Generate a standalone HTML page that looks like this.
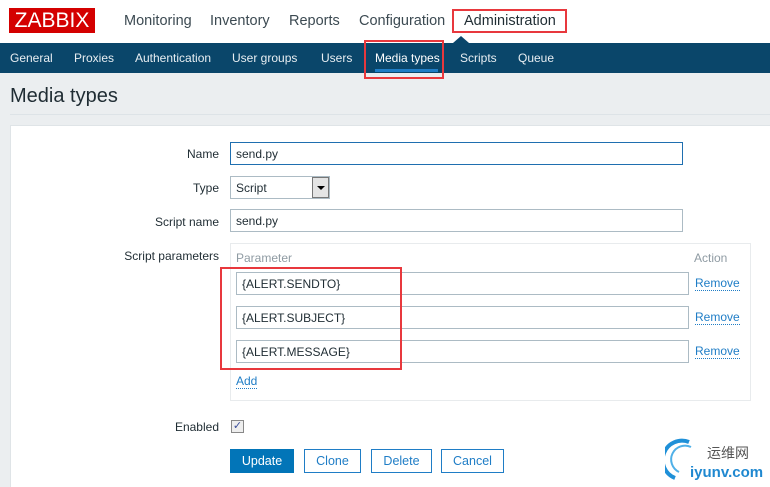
<!DOCTYPE html>
<html style="width:770px;height:487px;overflow:hidden"><head><meta charset="utf-8"><style>
*{box-sizing:border-box;margin:0;padding:0}
body{width:770px;height:487px;overflow:hidden;background:#ebeef0;font-family:"Liberation Sans",Arial,sans-serif;font-size:12px;color:#1f2c33;position:relative}
.a{position:absolute;white-space:nowrap}
.hdr{position:absolute;left:0;top:0;width:770px;height:43px;background:#fff}
.nav{position:absolute;left:0;top:43px;width:770px;height:30px;background:#0a466a}
.nav span{position:absolute;top:8px;color:#e8eef2;font-size:12px}
.top{font-size:14.5px;color:#3c4a52;top:13px}
.red{position:absolute;border:2px solid #e8383d}
.panel{position:absolute;left:10px;top:125px;width:770px;height:362px;background:#fff;border:1px solid #dfe4e7;border-bottom:none}
.lbl{position:absolute;text-align:right;width:200px;left:19px}
.in{position:absolute;background:#fff;border:1px solid #acbbc4;height:23px;padding:4px 5px;font-size:12px}
.rm{position:absolute;left:695px;color:#1f7dc6;border-bottom:1px dotted #1f7dc6;line-height:13px}
.btn{position:absolute;top:449px;height:24px;border:1px solid #1f7dc6;color:#1f7dc6;background:#fff;text-align:center;line-height:22px;font-size:12.5px}
</style></head><body>
<div class="hdr"></div>
<div class="a" style="left:9px;top:8px;width:86px;height:25px;background:#d40000;color:#fff;font-size:21px;line-height:25px;text-align:center">ZABBIX</div>
<span class="a top" style="left:124px">Monitoring</span>
<span class="a top" style="left:210px">Inventory</span>
<span class="a top" style="left:289px">Reports</span>
<span class="a top" style="left:359px">Configuration</span>
<span class="a top" style="left:464px;color:#1f2c33">Administration</span>
<div class="red" style="left:452px;top:9px;width:115px;height:24px"></div>
<div class="a" style="left:453px;top:36px;width:0;height:0;border-left:8px solid transparent;border-right:8px solid transparent;border-bottom:7px solid #0a466a"></div>
<div class="nav">
<span style="left:10px">General</span><span style="left:74px">Proxies</span><span style="left:135px">Authentication</span><span style="left:232px">User groups</span><span style="left:321px">Users</span><span style="left:375px;color:#fff">Media types</span><span style="left:460px">Scripts</span><span style="left:518px">Queue</span>
</div>
<div class="a" style="left:338px;top:70px;width:59px;height:3px;background:#1f7dc6;left:338px;display:none"></div>
<div class="a" style="left:338px;top:70px;height:3px;background:#1f7dc6;left:338px;width:0"></div>
<div class="a" style="left:375px;top:69px;width:63px;height:3px;background:#1f7dc6"></div>
<div class="red" style="left:364px;top:40px;width:80px;height:39px"></div>
<div class="a" style="left:10px;top:85px;font-size:20px;color:#1f2c33">Media types</div>
<div class="a" style="left:10px;top:114px;width:760px;height:1px;background:#dde3e7"></div>
<div class="panel"></div>
<div class="lbl" style="top:147px">Name</div>
<div class="in" style="left:230px;top:142px;width:453px;border-color:#1f6fb0">send.py</div>
<div class="lbl" style="top:181px">Type</div>
<div class="in" style="left:230px;top:176px;width:100px">Script</div>
<div class="a" style="left:312px;top:177px;width:17px;height:21px;background:#e4e4e4;border:1px solid #777"><div style="margin:8px 0 0 4px;width:0;height:0;border-left:4px solid transparent;border-right:4px solid transparent;border-top:4px solid #000"></div></div>
<div class="lbl" style="top:215px">Script name</div>
<div class="in" style="left:230px;top:209px;width:453px">send.py</div>
<div class="lbl" style="top:249px">Script parameters</div>
<div class="a" style="left:230px;top:243px;width:521px;height:158px;border:1px solid #e8ebed"></div>
<div class="a" style="left:236px;top:251px;color:#8f9ba3">Parameter</div>
<div class="a" style="left:694px;top:251px;color:#8f9ba3">Action</div>
<div class="in" style="left:236px;top:272px;width:453px">{ALERT.SENDTO}</div>
<div class="in" style="left:236px;top:306px;width:453px">{ALERT.SUBJECT}</div>
<div class="in" style="left:236px;top:340px;width:453px">{ALERT.MESSAGE}</div>
<div class="a rm" style="top:277px">Remove</div>
<div class="a rm" style="top:311px">Remove</div>
<div class="a rm" style="top:345px">Remove</div>
<div class="a rm" style="left:236px;top:375px">Add</div>
<div class="red" style="left:220px;top:267px;width:182px;height:103px"></div>
<div class="lbl" style="top:420px">Enabled</div>
<div class="a" style="left:231px;top:420px;width:13px;height:13px;border:1px solid #888;background:#eee;color:#3b4e9a;font-size:11px;line-height:11px;text-align:center">✓</div>
<div class="btn" style="left:230px;width:64px;background:#0275b8;color:#fff;border-color:#0275b8">Update</div>
<div class="btn" style="left:304px;width:57px">Clone</div>
<div class="btn" style="left:371px;width:61px">Delete</div>
<div class="btn" style="left:441px;width:63px">Cancel</div>
<svg class="a" style="left:665px;top:438px" width="30" height="45"><path d="M24 4 A18 18 0 0 0 10 40" stroke="#1f90d8" stroke-width="4" fill="none"/><path d="M26 9 A13 13 0 0 0 14 34" stroke="#4fb0e8" stroke-width="2" fill="none"/></svg>
<div class="a" style="left:707px;top:443px;font-size:14px;color:#555;font-family:'Liberation Sans','Noto Sans CJK SC',sans-serif">运维网</div>
<div class="a" style="left:690px;top:464px;font-size:15px;font-weight:bold;color:#1f88d0">iyunv.com</div>
</body></html>
